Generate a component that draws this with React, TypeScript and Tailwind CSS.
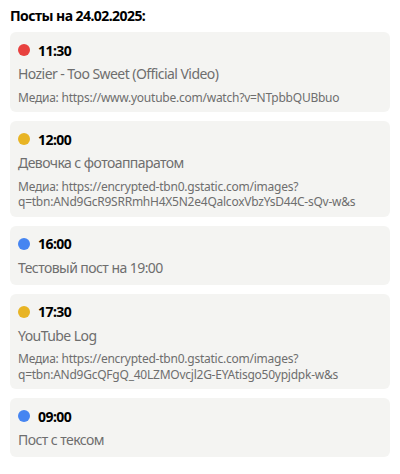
interface Post {
  id: number;
  time: string;
  title: string;
  media?: string;
  color: 'red' | 'yellow' | 'blue';
}

const posts: Post[] = [
  { id: 1, time: '11:30', title: 'Hozier - Too Sweet (Official Video)', media: 'https://www.youtube.com/watch?v=NTpbbQUBbuo', color: 'red' },
  { id: 2, time: '12:00', title: 'Девочка с фотоаппаратом', media: 'https://encrypted-tbn0.gstatic.com/images?q=tbn:ANd9GcR9SRRmhH4X5N2e4QalcoxVbzYsD44C-sQv-w&s', color: 'yellow' },
  { id: 3, time: '16:00', title: 'Тестовый пост на 19:00', color: 'blue' },
  { id: 4, time: '17:30', title: 'YouTube Log', media: 'https://encrypted-tbn0.gstatic.com/images?q=tbn:ANd9GcQFgQ_40LZMOvcjl2G-EYAtisgo50ypjdpk-w&s', color: 'yellow' },
  { id: 5, time: '09:00', title: 'Пост с тексом', color: 'blue' },
];

function PostCard({ post }: { post: Post }) {
  return (
    <div className="bg-[#f4f4f2] rounded-md px-2 pt-2 pb-[7px]">
      <div className="flex items-center gap-2 h-5">
        <span className={`w-3 h-3 rounded-full ${
          post.color === 'red' ? 'bg-[#e8413f]' :
          post.color === 'yellow' ? 'bg-[#e8b424]' :
          'bg-[#4685f1]'
        }`} />
        <span className="font-bold text-[14px] text-black">{post.time}</span>
      </div>
      <p className="mt-1 text-[14px] leading-5 text-[#6e6e6e]">{post.title}</p>
      {post.media && (
        <p className="mt-[5.5px] text-[12px] leading-[15.5px] text-[#6e6e6e] tracking-[-0.02em] break-words">Медиа: {post.media}</p>
      )}
    </div>
  );
}

export default function App() {
  return (
    <div className="bg-white px-[10px] pt-[6px] font-['Noto_Sans',sans-serif] tracking-[-0.035em]">
      <h3 className="font-bold text-[14px] leading-5 text-black">Посты на 24.02.2025:</h3>
      <div className="mt-[6px] flex flex-col gap-[9px]">
        {posts.map(p => <PostCard key={p.id} post={p} />)}
      </div>
    </div>
  );
}
